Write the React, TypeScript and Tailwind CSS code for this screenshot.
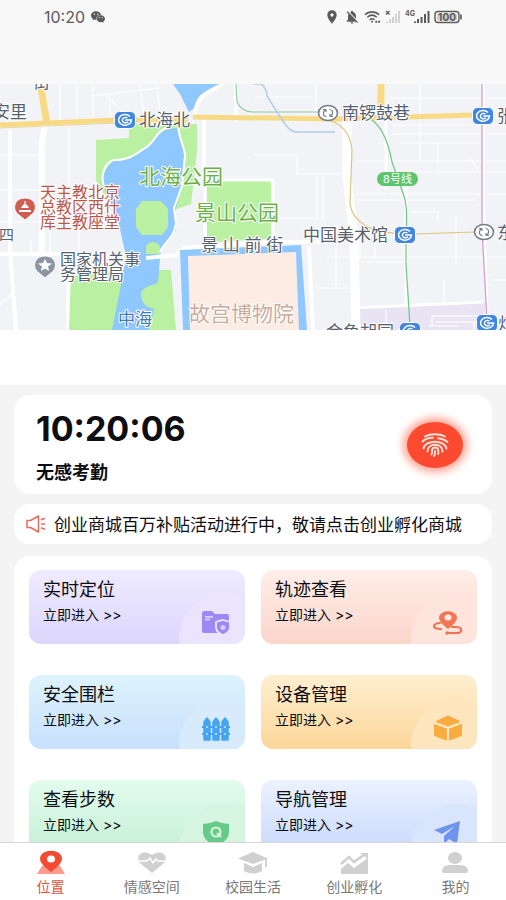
import type { ReactNode } from 'react';
import { AiFillWechat } from 'react-icons/ai';
import { MdLocationOn, MdNotificationsOff } from 'react-icons/md';

type Entry = {
    title: string;
    bg: string;
    bubble: string;
    icon: ReactNode;
};

function StatusBar() {
    return (
        <header className="h-[84px] bg-[#f8f8f8] px-11 text-[#5a5a5a]">
            <div className="flex h-[34px] items-center justify-between">
                <div className="flex items-center gap-1">
                    <span className="text-base">10:20</span>
                    <AiFillWechat className="h-4 w-[18px]" />
                </div>
                <div className="flex items-center gap-1">
                    <MdLocationOn className="h-4 w-4" />
                    <MdNotificationsOff className="h-4 w-4" />
                    <svg width="17" height="14" viewBox="0 0 18 14" fill="none" stroke="currentColor" strokeWidth="1.6">
                        <path d="M1 4.5C5 .6 12 .6 16 4.5M3.5 7.3c3-2.7 7-2.7 10 0M6 10c1.6-1.4 3.5-1.4 5 0" />
                        <circle cx="8.5" cy="12" r="1" fill="currentColor" stroke="none" />
                        <path d="M12 12h2M15 12h2" strokeWidth="2" />
                    </svg>
                    <svg width="16" height="14" viewBox="0 0 16 14">
                        <path d="M1 1l3.500 3.500M4.500 1L1 4.500" stroke="currentColor" strokeWidth="1.300" />
                        <path d="M2 13v-1.500M5 13v-4M8 13V7M11 13V4M14 13V1" stroke="#d2d2d2" strokeWidth="2" />
                    </svg>
                    <svg width="25" height="14" viewBox="0 0 25 14">
                        <text x="0" y="6" fontSize="7" fontWeight="700" fill="currentColor">4G</text>
                        <path d="M10 13v-1.500M13 13V9M16.500 13V7M20 13V4M23.500 13V1" stroke="currentColor" strokeWidth="2" />
                    </svg>
                    <svg width="28" height="14" viewBox="0 0 28 14">
                        <rect x="1" y="1.500" width="24" height="11" rx="3" fill="none" stroke="currentColor" strokeWidth="1.400" />
                        <path d="M27 4.500v5" stroke="currentColor" strokeWidth="1.600" />
                        <rect x="3" y="3.500" width="20" height="7" rx="1" fill="#cfcfcf" />
                        <text x="13" y="10.500" fontSize="10" fontWeight="700" textAnchor="middle" fill="currentColor">100</text>
                    </svg>
                </div>
            </div>
        </header>
    );
}

function Station({ x, y }: { x: number; y: number }) {
    return (
        <g transform={`translate(${x} ${y})`}>
            <rect x="-10.500" y="-8.500" width="21" height="17" rx="5" fill="#4186e0" stroke="#fff" strokeWidth="1" />
            <path d="M5 -3.500A6.500 5.300 0 1 0 6.500 0H0" fill="none" stroke="#fff" strokeWidth="1.500" />
            <path d="M2.500 -2A3.200 2.600 0 1 0 3 1.800" fill="none" stroke="#fff" strokeWidth="1.400" />
        </g>
    );
}

function Transfer({ x, y }: { x: number; y: number }) {
    return (
        <g transform={`translate(${x} ${y})`} fill="none" stroke="#777d86">
            <ellipse rx="9.500" ry="7.500" fill="#fff" strokeWidth="1.600" />
            <path d="M-1.500 3.500C-6 3-5-2.500-2-3.500M-2-3.500h-3M-2-3.500v2.500M1.500-3.500C6-3 5 2.500 2 3.500M2 3.500h3M2 3.500V1" strokeWidth="1.200" />
        </g>
    );
}

function CityMap() {
    return (
        <svg className="block w-full" viewBox="0 84 506 246" role="img" aria-label="地图">
            <rect y="84" width="506" height="246" fill="#f2f3f7" />
            <path d="M360 308l48-3 77-3v28H360z" fill="#e9e4f4" />

            {/* Side streets */}
            <g fill="none" stroke="#fff" strokeWidth="1.600" opacity="0.75">
                <path d="M60 84v38M77 84v36M93 84v34M93 96l65-8M105 94l24 24M140 84l4 32M157 84l3 32M110 118v-18" />
                <path d="M0 155h40M0 190h96M0 222h40M69 128v60M50 215v40M79 215v40M31 240h9M31 240v15" />
                <path d="M0 305l14-14M253 155h44M297 155v20M297 174h50M316 84v30M317 176v44M323 220v-44" />
                <path d="M253 97h63M390 98h116M393 125h113M393 134h113M400 143h80M356 161h150M391 172h115M420 84v76M438 143v32M470 158l8 12" />
                <path d="M356 194h30M390 194h116M262 218h60M345 200h130M410 212h28v10M456 216v48M360 240v20M375 234v24" />
                <path d="M326 257h180M336 287v-50M308 288h50M362 262h46M444 280v24M386 310v20M432 316h54M432 316v10M436 322h38v8M428 326h30M493 280h13" />
            </g>
            <g fill="none" stroke="#fff" strokeWidth="4">
                <path d="M10 130v120l6 80M0 254h80" />
                <path d="M46 124c-6 14-4 30-4 60v72" strokeWidth="6" />
                <path d="M236 84v38M204 120v60M69 258l-1 72M309 246l4 84" />
                <path d="M347 118v60l7 60 2 92" strokeWidth="9" />
                <path d="M386 120v70M406 180v126" strokeWidth="3" />
                <path d="M352 308l132-6" strokeWidth="3" />
                <path d="M484 84v120l4 126" strokeWidth="2" />
            </g>

            {/* Parks */}
            <g fill="#baf0a2">
                <path d="M96 140l33-2v-14h68v28l-6 52-17 6-70-16-8-14z" />
                <path d="M207 181h64v58l-64 3z" />
                <path d="M71 276l52-6h48l5 60H69z" />
                <path d="M119 222l8 30h33l17-30z" />
            </g>
            <path d="M205 242v-62h68v60" fill="none" stroke="#fff" strokeWidth="3" />

            {/* Lakes */}
            <g fill="#8ec8fe">
                <path d="M173 84h49l-22 12-6 12-5 4-9-18z" />
                <path d="M104 188c-4-10 2-22 10-27 16 0 22-6 34-14 10-6 6-18 30-19 0 12 6 20 7 28l-3 30-7 26 1 18-15 18-3 34-16 12 13 12-6 24h-37l8-40 6-34-9-40z" />
            </g>
            <path d="M136 209l6-8h19l7 8v18l-6 8h-20l-6-8z" fill="#baf0a2" />
            <path d="M146 246q6-8 14 0v8h-14z" fill="#baf0a2" />
            <path d="M141 292q7-8 18-8l-3 26-10-4q-6-6-5-14z" fill="#baf0a2" />
            <path d="M104 186c-4-10 1-24 10-26 16 0 22-6 34-14 8-6 8-14 18-18M178 118c-1 20 6 24 7 38l-3 30-8 22 2 16c-3 16-12 18-16 28" fill="none" stroke="#fff" strokeWidth="2" />
            <path d="M146 258l30-3 8-7 90-6h46M224 84c-22 10-28 14-29 32" fill="none" stroke="#fff" strokeWidth="4" />

            {/* Palace and moat */}
            <path d="M180 250l121-5 6 85H183z" fill="#8ec8fe" />
            <path d="M188 256l108-4 3 78H190z" fill="#fcece4" />

            {/* Main avenues */}
            <g fill="none" stroke="#f9da84">
                <path d="M0 125l118-5h70M193 117l143 2 140-4" strokeWidth="5" />
                <path d="M41 88l6 36" strokeWidth="7" />
                <path d="M381 84v26" strokeWidth="7" />
            </g>
            <path d="M0 128l118-5" stroke="#ecd6a4" fill="none" />

            {/* Metro lines */}
            <g fill="none" strokeWidth="1.200">
                <path d="M236 84l1 18q5 10 16 10h70" stroke="#8fcaa0" />
                <path d="M253 84h8q6 4 6 12l10 16 8 12q6 9 14 8h36" stroke="#b8cde6" strokeWidth="1.600" />
                <path d="M328 120q22 6 24 30l-2 54q2 14 16 22 12 7 40 8M415 234l60-2" stroke="#dcc57c" />
                <path d="M372 120q14 10 20 42l12 34q4 12 2 38v30l4 62" stroke="#6dc583" strokeWidth="1.200" />
                <path d="M482 84v146l5 90" stroke="#d49bcb" />
            </g>

            <g stroke="#fff" strokeWidth="2" strokeLinejoin="round" paintOrder="stroke" fontSize="17" fill="#56616f">
                <text x="33" y="88">街</text>
                <text x="-7" y="118">安里</text>
                <text x="139" y="126">北海北</text>
                <text x="342" y="119">南锣鼓巷</text>
                <text x="497" y="122">张</text>
                <text x="-1" y="240" fontSize="15">四</text>
                <text x="303" y="241">中国美术馆</text>
                <text x="497" y="239">东</text>
                <text x="498" y="330">灯</text>
                <text x="201" y="251">景 山 前 街</text>
                <g fontSize="16">
                    <text x="60" y="265">国家机关事</text>
                    <text x="60" y="280">务管理局</text>
                </g>
                <text x="326" y="338">金鱼胡同</text>
                <text x="118" y="325" fill="#3c7bb4">中海</text>
                <g fill="#b8574a" fontSize="16">
                    <text x="40" y="198">天主教北京</text>
                    <text x="40" y="213">总教区西什</text>
                    <text x="40" y="228">库主教座堂</text>
                </g>
                <g fill="#6bb047" fontSize="21">
                    <text x="139" y="184">北海公园</text>
                    <text x="195" y="220">景山公园</text>
                </g>
                <text x="189" y="321" fontSize="21" fill="#c9ac9a">故宫博物院</text>
            </g>

            <Station x={125} y={120} />
            <Station x={483} y={116} />
            <Station x={405} y={235} />
            <Station x={410} y={331} />
            <Station x={487} y={323} />
            <Transfer x={328} y={113} />
            <Transfer x={484} y={232} />

            <rect x="377" y="172" width="41" height="14" rx="7" fill="#5ec46d" />
            <text x="397.500" y="183" fontSize="11" textAnchor="middle" fill="#fff">8号线</text>

            <g transform="translate(25 207)">
                <path d="M0 13l-6-5C-13 4-12-9 0-9s13 13 6 17z" fill="#cf5d52" stroke="#fff" />
                <path d="M-6 3h12v2H-6zM-4 1q4-8 8 0zM-.600-6h1.200v4h-1.200z" fill="#fff" />
            </g>
            <g transform="translate(45 265)">
                <path d="M0 13l-6-5C-13 4-12-9 0-9s13 13 6 17z" fill="#8b96a2" stroke="#fff" />
                <path d="M0-6l2 4 5 .500-4 3 1.200 4.500L0 3.500-4.200 6-3 1.500l-4-3L-2-2z" fill="#fff" />
            </g>
        </svg>
    );
}

function ClockCard() {
    return (
        <section className="flex h-[99px] items-center justify-between rounded-2xl bg-white pl-[22px] pr-[29px]">
            <div>
                <p className="text-[34px]/[46px] font-bold">10:20:06</p>
                <p className="mt-2.5 text-[18px]/[22px] font-bold">无感考勤</p>
            </div>
            <button
                type="button"
                aria-label="打卡"
                className="flex h-[46px] w-14 items-center justify-center rounded-[50%] bg-[#fb4a2f] shadow-[0_0_8px_4px_#fda08f]"
            >
                <svg width="28" height="24" viewBox="0 0 28 24" fill="none" stroke="#ffe3dc" strokeWidth="1.900" strokeLinecap="round">
                    <path d="M4 3.500C9 .500 19 .500 24 3.500" />
                    <path d="M1.500 8.500C4 6 8 4.800 12 4.800M17 5.200c4 .500 7 1.500 9.500 3.800" />
                    <path d="M2.500 15.500C4 6.500 24 6.500 25.500 15.500" />
                    <path d="M6.500 18.500C6 9.500 22 9.500 21.500 18.500" />
                    <path d="M10.500 21.500c1-1.500.500-2.500.500-4 .300-4 6-4 6.300 0v3.500" />
                    <path d="M14.200 18c0 2-.200 3.500-1 5" />
                </svg>
            </button>
        </section>
    );
}

function Notice() {
    return (
        <section className="flex h-10 items-center gap-2 rounded-2xl bg-white px-3">
            <svg className="shrink-0" width="20" height="18" viewBox="0 0 20 18" fill="none" stroke="#e96b5b" strokeWidth="1.500" strokeLinejoin="round" strokeLinecap="round">
                <path d="M1 5.500h3.500L12.500 1v16l-8-4.500H1z" />
                <path d="M15.500 4.500l3-1M15.500 9h3M15.500 13l3 1" />
            </svg>
            <p className="truncate pt-0.5 text-[17px]/[24px]">创业商城百万补贴活动进行中，敬请点击创业孵化商城</p>
        </section>
    );
}

const entries: Entry[] = [
    {
        title: '实时定位',
        bg: 'bg-linear-to-b from-[#efebfe] to-[#dcd6fd]',
        bubble: 'bg-[#eae5fd]',
        icon: (
            <svg width="30" height="26" viewBox="0 0 30 26">
                <path d="M3 1h8l3 3h12q2 0 2 2v17H3q-2 0-2-2V3q0-2 2-2z" fill="#9d88f5" />
                <path d="M4 7h8M4 9.500h5" stroke="#e4ddff" strokeWidth="1.300" />
                <path d="M22 10l7 2v6q-1 5-7 7-6-2-7-7v-6z" fill="#9d88f5" stroke="#ebe6fd" strokeWidth="1.800" />
                <circle cx="22" cy="17.500" r="2.500" fill="#d9d0ff" />
            </svg>
        ),
    },
    {
        title: '轨迹查看',
        bg: 'bg-linear-to-b from-[#feeee8] to-[#fbd5ca]',
        bubble: 'bg-[#fde5de]',
        icon: (
            <svg width="30" height="26" viewBox="0 0 30 26">
                <path d="M7 13q-5 0-6 3 0 3 7 3M15 23h9q5 0 4-4-1-2-5-2h-4" fill="none" stroke="#ef7350" strokeWidth="2.200" strokeLinecap="round" />
                <circle cx="14" cy="23" r="1.800" fill="#ef7350" />
                <path d="M15 19q-9-7-9-11c0-9 18-9 18 0q0 4-9 11z" fill="#f27652" />
                <ellipse cx="15" cy="7.500" rx="3.500" ry="3" fill="#ffe9e2" />
            </svg>
        ),
    },
    {
        title: '安全围栏',
        bg: 'bg-linear-to-b from-[#ddf3fd] to-[#c8e0fd]',
        bubble: 'bg-[#d8ebfc]',
        icon: (
            <svg width="30" height="24" viewBox="0 0 30 24">
                <path d="M1 10h28M1 17h28" stroke="#45a5f3" strokeWidth="2" />
                <path d="M3 5l3-4 3 4v18H3zM12 5l3-4 3 4v18h-6zM21 5l3-4 3 4v18h-6z" fill="#45a5f3" stroke="#45a5f3" strokeWidth="1.500" strokeLinejoin="round" />
                <path d="M6 9v2M15 9v2M24 9v2M6 16v2M15 16v2M24 16v2" stroke="#c5e5ff" strokeWidth="1.500" />
            </svg>
        ),
    },
    {
        title: '设备管理',
        bg: 'bg-linear-to-b from-[#feefd0] to-[#fdd699]',
        bubble: 'bg-[#fde5be]',
        icon: (
            <svg width="30" height="26" viewBox="0 0 30 26" fill="#f8ab3e" stroke="#f8ab3e" strokeLinejoin="round">
                <path d="M15 1l12 5.500L15 11 3 6.500z" />
                <path d="M1.500 9.500l12 4.500v11l-12-4.500z" />
                <path d="M28.500 9.500l-12 4.500v11l12-4.500z" />
            </svg>
        ),
    },
    {
        title: '查看步数',
        bg: 'bg-linear-to-b from-[#e2fced] to-[#c5f0d5]',
        bubble: 'bg-[#d5f5e1]',
        icon: (
            <svg width="30" height="26" viewBox="0 0 30 26">
                <path d="M15 1q6 3 13 3v8c0 7-6 11-13 14C8 23 2 19 2 12V4q7 0 13-3z" fill="#66c987" />
                <circle cx="15" cy="12" r="4.500" fill="none" stroke="#d7f8e1" strokeWidth="2.200" />
                <path d="M16 13l4 4" stroke="#d7f8e1" strokeWidth="2" />
            </svg>
        ),
    },
    {
        title: '导航管理',
        bg: 'bg-linear-to-b from-[#ebf2ff] to-[#c9d9fc]',
        bubble: 'bg-[#d9e5fd]',
        icon: (
            <svg width="30" height="26" viewBox="0 0 30 26" fill="#6f94ed">
                <path d="M27 1L1 10l8 4L22 6 11 16v8l5-5 8 5z" />
            </svg>
        ),
    },
];

function EntryCard({ entry }: { entry: Entry }) {
    return (
        <button
            type="button"
            className={`relative flex h-[74px] flex-col overflow-hidden rounded-xl px-3.5 pt-2 text-left ${entry.bg}`}
        >
            <span className={`absolute -bottom-10 -right-6 size-[90px] rounded-full ${entry.bubble}`} />
            <span className="absolute bottom-2 right-3.5">{entry.icon}</span>
            <span className="text-[18px]/[24px]">{entry.title}</span>
            <span className="mt-0.5 text-[14px]/[22px]">立即进入 &gt;&gt;</span>
        </button>
    );
}

const tabs = [
    {
        label: '位置',
        icon: (
            <>
                <path d="M6 16h18l5 8H1z" fill="#fb9c8c" />
                <path d="M15 22Q4 14 4 9C4-2 26-2 26 9q0 5-11 13z" fill="#f34a33" />
                <ellipse cx="15" cy="9" rx="4" ry="3.500" fill="#fff" />
            </>
        ),
    },
    {
        label: '情感空间',
        icon: (
            <>
                <path d="M15 23L3 13C-3 4 8-1 15 5c7-6 18-1 12 8z" />
                <path d="M2 11h8l3-3 3 5 3-4 2 2h7" fill="none" stroke="#fff" strokeWidth="1.500" />
            </>
        ),
    },
    {
        label: '校园生活',
        icon: (
            <>
                <path d="M15 2l15 6.500L15 14 0 8.500z" />
                <path d="M6 13l9 4 9-4v8q-9 5-18 0z" />
                <path d="M27 9h2v8h-2z" />
            </>
        ),
    },
    {
        label: '创业孵化',
        icon: (
            <>
                <path d="M2 19l7-6 6 5L29 8v16H2z" />
                <path d="M2 14l8-7 5 5L26 4" fill="none" stroke="#d0d0d0" strokeWidth="2.500" />
                <path d="M21 3h8v6z" />
            </>
        ),
    },
    {
        label: '我的',
        icon: (
            <>
                <ellipse cx="15" cy="8" rx="7" ry="6" />
                <path d="M2 21q0-6 8-6h10q8 0 8 6 0 2-2 2H4q-2 0-2-2z" />
            </>
        ),
    },
];

function TabBar() {
    return (
        <nav className="flex h-[58px] shrink-0 border-t border-[#d6d6d6] bg-white">
            {tabs.map((tab, i) => (
                <a
                    key={tab.label}
                    href="#"
                    aria-current={i === 0 ? 'page' : undefined}
                    className={`flex flex-1 flex-col items-center pt-[7px] text-[14px]/[24px] ${i === 0 ? 'text-[#e8503c]' : 'text-[#777]'}`}
                >
                    <svg width="30" height="25" viewBox="0 0 30 25" fill="#d0d0d0">
                        {tab.icon}
                    </svg>
                    {tab.label}
                </a>
            ))}
        </nav>
    );
}

export default function App() {
    return (
        <div className="flex h-screen flex-col bg-[#f4f4f4] font-['Inter','Noto_Sans_CJK_SC',sans-serif] text-[#0d0d12]">
            <main className="min-h-0 flex-1 overflow-y-auto [scrollbar-width:none]">
                <StatusBar />
                <CityMap />
                <div className="h-[55px] bg-white" />
                <div className="flex flex-col gap-2.5 px-3.5 py-2.5">
                    <ClockCard />
                    <Notice />
                    <section className="mt-0.5 grid grid-cols-2 gap-x-4 gap-y-[31px] rounded-2xl bg-white px-[15px] pt-3.5 pb-8">
                        {entries.map((entry) => (
                            <EntryCard key={entry.title} entry={entry} />
                        ))}
                    </section>
                </div>
            </main>
            <TabBar />
        </div>
    );
}
